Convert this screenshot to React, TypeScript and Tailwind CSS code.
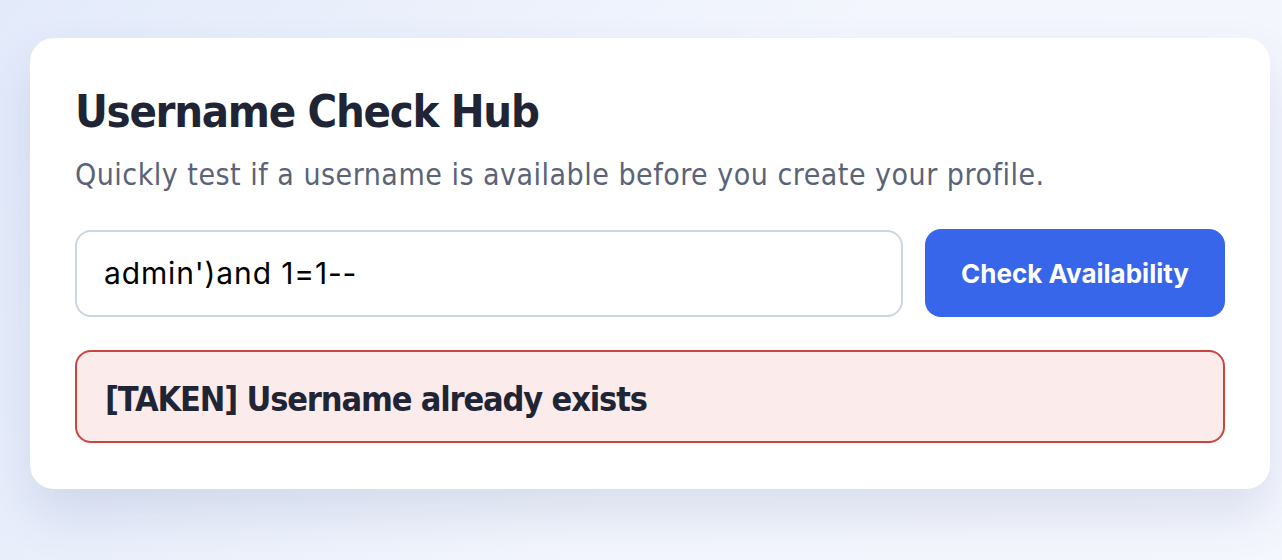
export default function App() {
  return (
    <div className="min-h-[560px] w-[1282px] overflow-hidden bg-[linear-gradient(120deg,#e3eafa_0%,#f3f6fd_55%,#f5f7fe_100%)] pt-[38px] pl-[30px]">
      <div className="w-[1240px] rounded-[24px] bg-white px-[45px] pt-[47px] pb-[46px] shadow-[0_26px_50px_rgba(60,80,140,0.14)]">
        <h1 className="font-['DejaVu_Sans_Condensed','DejaVu_Sans',sans-serif] text-[45px] font-bold leading-[54px] tracking-[-1.3px] text-[#1f2535]">
          Username Check Hub
        </h1>
        <p className="mt-[18px] font-['DejaVu_Sans_Condensed','DejaVu_Sans',sans-serif] text-[30px] leading-[36px] tracking-[0.5px] text-[#5b6378]">
          Quickly test if a username is available before you create your profile.
        </p>
        <div className="mt-[36px] flex items-center gap-[22px]">
          <input
            readOnly
            value="admin')and 1=1--"
            className="h-[87px] flex-1 rounded-[16px] border-2 border-[#cdd5e1] bg-white px-[27px] font-['Inter',sans-serif] text-[30px] tracking-[0.85px] text-black outline-none"
          />
          <button className="h-[88px] w-[300px] rounded-[16px] bg-[#3766eb] font-['Inter',sans-serif] text-[26px] font-bold text-white">
            Check Availability
          </button>
        </div>
        <div className="mt-[33px] flex h-[93px] items-center rounded-[16px] border-2 border-[#cc4440] bg-[#fcebeb] px-[28px] pt-[6px]">
          <span className="font-['DejaVu_Sans_Condensed','DejaVu_Sans',sans-serif] text-[34px] font-bold tracking-[-1.15px] text-[#1f2535]">
            [TAKEN] Username already exists
          </span>
        </div>
      </div>
    </div>
  );
}
